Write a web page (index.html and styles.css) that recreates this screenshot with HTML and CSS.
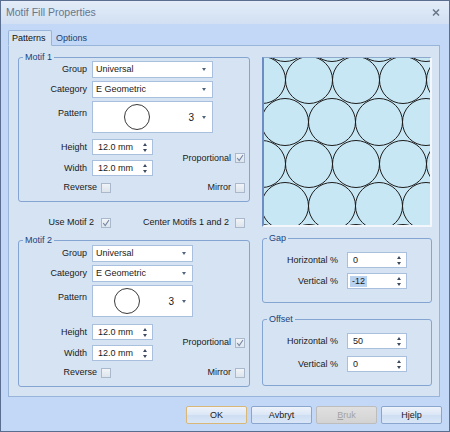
FILE: index.html
```html
<!DOCTYPE html>
<html lang="en">

<head>
    <meta charset="UTF-8">
    <title>Motif Fill Properties</title>
    <link rel="stylesheet" href="styles.css">
</head>

<body>
    <div class="window">
        <div class="titlebar">
            <span class="title">Motif Fill Properties</span>
            <svg class="close" width="8" height="7" viewBox="0 0 8 7">
                <path d="M1 0.5L7 6.5M7 0.5L1 6.5" stroke="#6b788a" stroke-width="1.5" />
            </svg>
        </div>

        <div class="client">
            <div class="tabs">
                <div class="tab active">Patterns</div>
                <div class="tab">Options</div>
            </div>

            <div class="panel">
                <!-- left: motif 1 / motif 2 -->
                <div class="col-left">
                    <fieldset class="group motif">
                        <legend>Motif 1</legend>
                        <div class="field">
                            <label>Group</label>
                            <div class="select"><span>Universal</span><i class="arrow"></i></div>
                        </div>
                        <div class="field">
                            <label>Category</label>
                            <div class="select"><span>E Geometric</span><i class="arrow"></i></div>
                        </div>
                        <div class="field pattern-row">
                            <label>Pattern</label>
                            <div class="select pattern">
                                <span class="swatch">
                                    <svg width="28" height="28" viewBox="0 0 28 28"><circle cx="14" cy="14" r="12.5" fill="none" stroke="#3a3a3a" stroke-width="1" /></svg>
                                </span>
                                <span class="num">3</span><i class="arrow"></i>
                            </div>
                        </div>
                        <div class="size-block">
                            <div class="sizes">
                                <div class="field">
                                    <label>Height</label>
                                    <div class="spin"><span>12.0 mm</span><i class="spin-btns"><b class="up"></b><b class="down"></b></i></div>
                                </div>
                                <div class="field">
                                    <label>Width</label>
                                    <div class="spin"><span>12.0 mm</span><i class="spin-btns"><b class="up"></b><b class="down"></b></i></div>
                                </div>
                            </div>
                            <div class="check">
                                <span>Proportional</span>
                                <span class="chk"><svg width="8" height="8" viewBox="0 0 8 8"><path d="M1.2 4L3.2 6.5L7 1" fill="none" stroke="#7286a3" stroke-width="1.1" /></svg></span>
                            </div>
                        </div>
                        <div class="check-row">
                            <div class="check first"><span>Reverse</span><span class="chk"></span></div>
                            <div class="check"><span>Mirror</span><span class="chk"></span></div>
                        </div>
                    </fieldset>

                    <div class="check-row toggles">
                        <div class="check first">
                            <span>Use Motif 2</span>
                            <span class="chk"><svg width="8" height="8" viewBox="0 0 8 8"><path d="M1.2 4L3.2 6.5L7 1" fill="none" stroke="#7286a3" stroke-width="1.1" /></svg></span>
                        </div>
                        <div class="check"><span>Center Motifs 1 and 2</span><span class="chk"></span></div>
                    </div>

                    <fieldset class="group motif motif2">
                        <legend>Motif 2</legend>
                        <div class="field">
                            <label>Group</label>
                            <div class="select"><span>Universal</span><i class="arrow"></i></div>
                        </div>
                        <div class="field">
                            <label>Category</label>
                            <div class="select"><span>E Geometric</span><i class="arrow"></i></div>
                        </div>
                        <div class="field pattern-row">
                            <label>Pattern</label>
                            <div class="select pattern">
                                <span class="swatch">
                                    <svg width="28" height="28" viewBox="0 0 28 28"><circle cx="14" cy="14" r="12.5" fill="none" stroke="#3a3a3a" stroke-width="1" /></svg>
                                </span>
                                <span class="num">3</span><i class="arrow"></i>
                            </div>
                        </div>
                        <div class="size-block">
                            <div class="sizes">
                                <div class="field">
                                    <label>Height</label>
                                    <div class="spin"><span>12.0 mm</span><i class="spin-btns"><b class="up"></b><b class="down"></b></i></div>
                                </div>
                                <div class="field">
                                    <label>Width</label>
                                    <div class="spin"><span>12.0 mm</span><i class="spin-btns"><b class="up"></b><b class="down"></b></i></div>
                                </div>
                            </div>
                            <div class="check">
                                <span>Proportional</span>
                                <span class="chk"><svg width="8" height="8" viewBox="0 0 8 8"><path d="M1.2 4L3.2 6.5L7 1" fill="none" stroke="#7286a3" stroke-width="1.1" /></svg></span>
                            </div>
                        </div>
                        <div class="check-row">
                            <div class="check first"><span>Reverse</span><span class="chk"></span></div>
                            <div class="check"><span>Mirror</span><span class="chk"></span></div>
                        </div>
                    </fieldset>
                </div>

                <!-- right: preview, gap, offset -->
                <div class="col-right">
                    <div class="preview">
                        <svg width="166" height="167" viewBox="0 0 166 167">
                            <defs>
                                <pattern id="rings" patternUnits="userSpaceOnUse" width="47" height="84">
                                    <g fill="none" stroke="#1c1c1c" stroke-width="1">
                                        <circle cx="45" cy="22" r="23.5" />
                                        <circle cx="-2" cy="22" r="23.5" />
                                        <circle cx="45" cy="106" r="23.5" />
                                        <circle cx="-2" cy="106" r="23.5" />
                                        <circle cx="21" cy="64" r="23.5" />
                                        <circle cx="68" cy="64" r="23.5" />
                                        <circle cx="21" cy="-20" r="23.5" />
                                        <circle cx="68" cy="-20" r="23.5" />
                                    </g>
                                </pattern>
                            </defs>
                            <rect width="166" height="167" fill="#c8e7f5" />
                            <rect width="166" height="167" fill="url(#rings)" />
                        </svg>
                    </div>

                    <fieldset class="group offsets">
                        <legend>Gap</legend>
                        <div class="field">
                            <label>Horizontal %</label>
                            <div class="spin"><span>0</span><i class="spin-btns"><b class="up"></b><b class="down"></b></i></div>
                        </div>
                        <div class="field">
                            <label>Vertical %</label>
                            <div class="spin"><span class="selected">-12</span><i class="spin-btns"><b class="up"></b><b class="down"></b></i></div>
                        </div>
                    </fieldset>

                    <fieldset class="group offsets offset">
                        <legend>Offset</legend>
                        <div class="field">
                            <label>Horizontal %</label>
                            <div class="spin"><span>50</span><i class="spin-btns"><b class="up"></b><b class="down"></b></i></div>
                        </div>
                        <div class="field">
                            <label>Vertical %</label>
                            <div class="spin"><span>0</span><i class="spin-btns"><b class="up"></b><b class="down"></b></i></div>
                        </div>
                    </fieldset>
                </div>
            </div>

            <div class="buttons">
                <div class="btn default">OK</div>
                <div class="btn">Avbryt</div>
                <div class="btn disabled"><u>B</u>ruk</div>
                <div class="btn">Hjelp</div>
            </div>
        </div>
    </div>
</body>

</html>
```

FILE: styles.css
```css
* {
    box-sizing: border-box;
}

body {
    margin: 0;
    font-family: "Liberation Sans", Arial, sans-serif;
    font-size: 9px;
    line-height: 11px;
    color: #1a1a1a;
}

.window {
    width: 450px;
    height: 432px;
    border: 1px solid #5a6f90;
    background-color: #c2d8f6;
    display: flex;
    flex-direction: column;
}

.titlebar {
    height: 23px;
    flex: none;
    display: flex;
    align-items: center;
    justify-content: space-between;
    padding: 0 9px 0 5px;
    background: linear-gradient(#e3ecf8, #d2e0f3);
}

.title {
    font-size: 10.5px;
    color: #66778e;
}

.client {
    flex: 1;
    display: flex;
    flex-direction: column;
    padding: 6px 9px 0 7px;
}

/* tabs */

.tabs {
    position: relative;
    z-index: 1;
    display: flex;
    align-items: flex-end;
    height: 16px;
    margin-bottom: -1px;
}

.tab {
    height: 13px;
    padding: 0 4px;
    color: #1d3d70;
}

.tab.active {
    width: 44px;
    height: 16px;
    padding: 2px 0 0 3px;
    color: #111;
    background-color: #d5e3f2;
    border: 1px solid #98b4d9;
    border-bottom-color: #d5e3f2;
    border-radius: 2px 2px 0 0;
}

.panel {
    height: 352px;
    display: flex;
    gap: 12px;
    padding: 6px 7px 0 9px;
    background-color: #d5e3f2;
    border: 1px solid #98b4d9;
}

.col-left {
    width: 232px;
    display: flex;
    flex-direction: column;
}

.col-right {
    width: 170px;
    padding-top: 5px;
    display: flex;
    flex-direction: column;
}

/* group boxes */

.group {
    margin: 0;
    min-width: 0;
    padding: 0 4px 0 5px;
    border: 1px solid #84a4d2;
    border-radius: 3px;
}

legend {
    padding: 0 2px;
    margin-left: -1px;
    line-height: 10px;
    color: #1b437f;
}

.field {
    display: flex;
    align-items: center;
}

.field label {
    width: 63px;
    margin-right: 5px;
    text-align: right;
}

.select {
    width: 121px;
    height: 17px;
    display: flex;
    align-items: center;
    justify-content: space-between;
    padding: 0 6px 0 3px;
    background-color: #fff;
    border: 1px solid #a8bfdd;
}

.motif2 .select {
    width: 101px;
}

.motif .field + .field {
    margin-top: 3px;
}

.motif .field:first-of-type {
    margin-top: -1px;
}

.motif2 .field:first-of-type {
    margin-top: 0;
}

.pattern-row {
    align-items: flex-start;
}

.pattern-row label {
    padding-top: 7px;
}

.pattern {
    height: 32px;
    padding-left: 0;
}

.swatch {
    flex: 1;
    display: flex;
    justify-content: center;
    align-items: center;
    padding-right: 7px;
}

.num {
    margin-right: 8px;
    font-size: 10px;
}

.arrow {
    width: 0;
    height: 0;
    border-left: 2.5px solid transparent;
    border-right: 2.5px solid transparent;
    border-top: 3px solid #52637c;
}

.spin {
    width: 61px;
    height: 16px;
    display: flex;
    align-items: center;
    justify-content: space-between;
    padding: 0 5px 0 5px;
    background-color: #fff;
    border: 1px solid #a8bfdd;
}

.spin-btns {
    display: flex;
    flex-direction: column;
    gap: 3px;
}

.up,
.down {
    width: 0;
    height: 0;
    border-left: 2.5px solid transparent;
    border-right: 2.5px solid transparent;
}

.up {
    border-bottom: 3px solid #3d4b60;
}

.down {
    border-top: 3px solid #3d4b60;
}

.size-block {
    display: flex;
    align-items: center;
    justify-content: space-between;
    margin-top: 7px;
}

.sizes .field + .field {
    margin-top: 5px;
}

/* checkboxes */

.check-row {
    display: flex;
    align-items: center;
    justify-content: space-between;
    margin-top: 6px;
    padding-bottom: 8px;
}

.check {
    display: flex;
    align-items: center;
    gap: 4px;
}

.check.first {
    width: 87px;
    justify-content: flex-end;
}

.chk {
    width: 10px;
    height: 10px;
    display: flex;
    align-items: center;
    justify-content: center;
    border: 1px solid #a9b8cb;
    background: linear-gradient(#f1f4f8, #dde4ec);
}

.toggles {
    margin-top: 15px;
    padding: 0 5px 0 0;
}

.toggles .check.first {
    width: 93px;
    gap: 7px;
}

.toggles .check {
    gap: 6px;
}

.motif2 {
    margin-top: 7px;
}

/* preview */

.preview {
    width: 170px;
    height: 170px;
    border-style: solid;
    border-width: 1px 2px 2px 2px;
    border-color: #8ea8cc #f3f7fc #f3f7fc #6b8dc4;
}

.preview svg {
    display: block;
}

.offsets {
    margin-top: 6px;
    padding: 0 5px 13px 5px;
}

.offsets .field:first-of-type {
    margin-top: 9px;
}

.offsets .field + .field {
    margin-top: 5px;
}

.offsets .field label {
    width: 70px;
    margin-right: 9px;
}

.offsets .spin {
    width: 60px;
}

.offset {
    margin-top: 11px;
}

.offset .field + .field {
    margin-top: 7px;
}

.selected {
    margin-left: -3px;
    padding: 0 2px;
    background-color: #b9d2f0;
}

/* buttons */

.buttons {
    display: flex;
    justify-content: flex-end;
    gap: 4px;
    margin-top: 9px;
    margin-right: -2px;
}

.btn {
    width: 61px;
    height: 18px;
    line-height: 16px;
    text-align: center;
    border: 1px solid #8aa6cf;
    border-radius: 2px;
    background: linear-gradient(#eef3fb, #dae6f6 50%, #cedef3 51%, #d9e6f7);
}

.btn.default {
    border-color: #d9b877;
}

.btn.disabled {
    color: #a3a3a3;
    border-color: #bdbdbd;
    background: linear-gradient(#e0e0e0, #d3d3d3);
}
```
